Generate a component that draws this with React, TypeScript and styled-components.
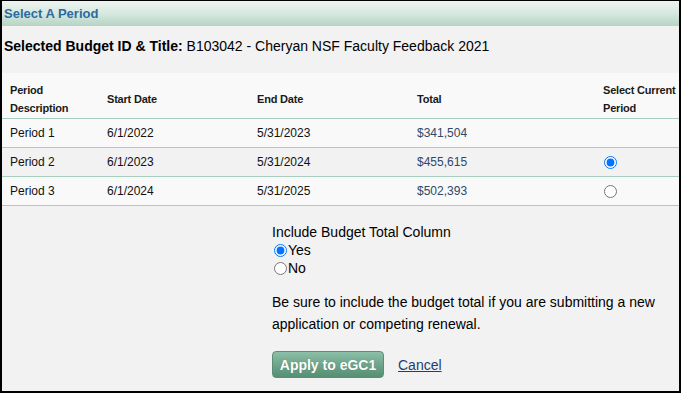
import * as React from "react";
import styled, { createGlobalStyle } from "styled-components";

const GlobalStyle = createGlobalStyle`
html, body {
  margin: 0;
  padding: 0;
  background: #fff;
}
body {
  font-family: Arial, "Liberation Sans", sans-serif;
}
`;

type Period = {
    name: string;
    start: string;
    end: string;
    total: string;
    selectable: boolean;
};

const periods: Period[] = [
    { name: "Period 1", start: "6/1/2022", end: "5/31/2023", total: "$341,504", selectable: false },
    { name: "Period 2", start: "6/1/2023", end: "5/31/2024", total: "$455,615", selectable: true },
    { name: "Period 3", start: "6/1/2024", end: "5/31/2025", total: "$502,393", selectable: true },
];

const Frame = styled.div`
box-sizing: border-box;
width: 681px;
height: 393px;
border: 2px solid #000;
border-top-width: 1px;
background: #f2f2f2;
font-family: Arial, "Liberation Sans", sans-serif;
color: #000;
display: flex;
flex-direction: column;
overflow: hidden;
`;

const Header = styled.div`
height: 25px;
flex-shrink: 0;
background: linear-gradient(to bottom, #eef5f2 0%, #d6e8df 50%, #b6d4c5 100%);
padding-left: 2px;
display: flex;
align-items: center;
`;

const HeaderTitle = styled.div`
font-size: 13px;
font-weight: bold;
color: #2b6aa3;
`;

const Selected = styled.div`
font-size: 14px;
padding: 12px 2px 0;
height: 35px;
line-height: 16px;
`;

const Label = styled.span`
font-weight: bold;
`;

const Table = styled.table`
width: 100%;
table-layout: fixed;
border-collapse: collapse;
background: #f9f9f9;
`;

const Th = styled.th<{ $w: number }>`
box-sizing: border-box;
width: ${p => p.$w}px;
text-align: left;
font-size: 11px;
font-weight: bold;
line-height: 18px;
letter-spacing: -0.2px;
color: #1a1a1a;
padding: 8px 0 1px 8px;
white-space: nowrap;
vertical-align: middle;
`;

const Row = styled.tr<{ $shade: boolean }>`
background: ${p => (p.$shade ? "#f2f2f2" : "#f9f9f9")};
border-top: 1px solid #a7cdbf;
&:last-child {
  border-bottom: 1px solid #a7cdbf;
}
`;

const Td = styled.td<{ $money?: boolean }>`
font-size: 12px;
height: 28px;
padding: 0 8px;
color: ${p => (p.$money ? "#30486a" : "#111")};
vertical-align: middle;
`;

const RadioCell = styled.td`
height: 28px;
padding: 0 0 0 9px;
vertical-align: middle;
`;

const Radio = styled.input`
margin: 0;
width: 13px;
height: 13px;
vertical-align: middle;
`;

const Options = styled.div`
padding: 18px 0 0 270px;
font-size: 14px;
`;

const OptionTitle = styled.div`
line-height: 17px;
`;

const Choice = styled.label`
display: flex;
align-items: center;
gap: 1px;
line-height: 17px;
padding-left: 2px;
margin-top: 1px;
`;

const Note = styled.p`
margin: 14px 0 0;
line-height: 22px;
width: 400px;
`;

const Actions = styled.div`
display: flex;
align-items: center;
gap: 14px;
margin-top: 16px;
`;

const ApplyButton = styled.button`
box-sizing: border-box;
height: 27px;
width: 112px;
border: 1px solid #5a8e76;
border-radius: 4px;
background: linear-gradient(to bottom, #8cbfa7 0%, #6ea58b 50%, #558f74 100%);
color: #fff;
font-family: Arial, "Liberation Sans", sans-serif;
font-size: 14px;
font-weight: bold;
padding: 0;
text-shadow: 0 0 1px rgba(0, 0, 0, 0.25);
`;

const CancelLink = styled.a`
color: #1f3d72;
text-decoration: underline;
font-size: 14px;
`;

const App: React.FC = () => (
    <>
        <GlobalStyle />
        <Frame>
            <Header>
                <HeaderTitle>Select A Period</HeaderTitle>
            </Header>
            <Selected>
                <Label>Selected Budget ID &amp; Title:</Label> B103042 - Cheryan NSF Faculty Feedback 2021
            </Selected>
            <Table>
                <thead>
                    <tr>
                        <Th $w={97}>Period<br />Description</Th>
                        <Th $w={150}>Start Date</Th>
                        <Th $w={160}>End Date</Th>
                        <Th $w={186}>Total</Th>
                        <Th $w={84}>Select Current<br />Period</Th>
                    </tr>
                </thead>
                <tbody>
                    {periods.map((p, i) => (
                        <Row key={p.name} $shade={i % 2 === 1}>
                            <Td>{p.name}</Td>
                            <Td>{p.start}</Td>
                            <Td>{p.end}</Td>
                            <Td $money>{p.total}</Td>
                            <RadioCell>
                                {p.selectable && (
                                    <Radio type="radio" name="period" defaultChecked={i === 1} />
                                )}
                            </RadioCell>
                        </Row>
                    ))}
                </tbody>
            </Table>
            <Options>
                <OptionTitle>Include Budget Total Column</OptionTitle>
                <Choice>
                    <Radio type="radio" name="total" defaultChecked />Yes
                </Choice>
                <Choice>
                    <Radio type="radio" name="total" />No
                </Choice>
                <Note>
                    Be sure to include the budget total if you are submitting a new application or competing renewal.
                </Note>
                <Actions>
                    <ApplyButton type="button">Apply to eGC1</ApplyButton>
                    <CancelLink href="#">Cancel</CancelLink>
                </Actions>
            </Options>
        </Frame>
    </>
);

export default App;
